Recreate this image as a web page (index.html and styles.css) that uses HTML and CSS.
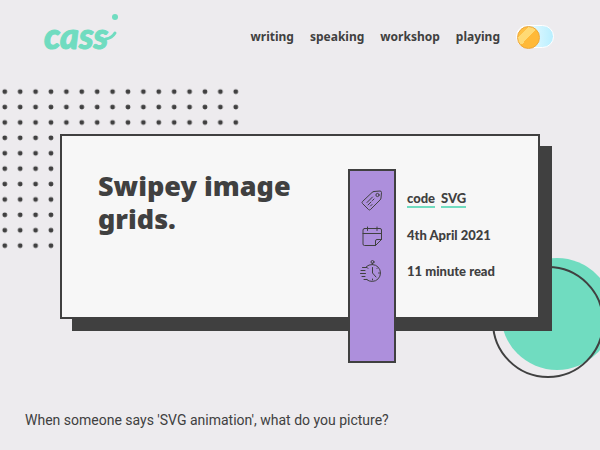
FILE: index.html
```html
<!DOCTYPE html>
<html lang="en">
<head>
<meta charset="utf-8">
<meta name="viewport" content="width=device-width, initial-scale=1">
<title>Swipey image grids.</title>
<link rel="stylesheet" href="styles.css">
</head>
<body>
<header class="site-header">
  <a class="logo" href="#" aria-label="cass">
    <svg width="80" height="44" viewBox="0 0 80 44">
      <text class="logo-text" x="0" y="37">cass</text>
      <path class="logo-tail" d="M62 27Q68 26 71 21"/>
      <circle class="logo-dot" cx="71" cy="5" r="3"/>
    </svg>
  </a>
  <nav class="nav">
    <a href="#">writing</a>
    <a href="#">speaking</a>
    <a href="#">workshop</a>
    <a href="#">playing</a>
    <input class="toggle" type="checkbox" aria-label="Dark theme">
  </nav>
</header>
<main>
  <section class="hero">
    <svg class="dots" width="248" height="170" aria-hidden="true">
      <defs>
        <pattern id="dot" width="15.4" height="15.4" patternUnits="userSpaceOnUse">
          <circle cx="4.8" cy="7.7" r="2.4"/>
        </pattern>
      </defs>
      <rect width="246" height="169.4" fill="url(#dot)"/>
    </svg>
    <svg class="circles" width="124" height="124" viewBox="0 0 124 124" aria-hidden="true">
      <circle class="disc" cx="66" cy="58" r="56"/>
      <circle class="ring" cx="57" cy="66" r="55"/>
    </svg>
    <article class="card">
      <h1>Swipey image grids.</h1>
      <div class="meta">
        <div class="ribbon">
          <svg class="icon" viewBox="0 0 24 24" aria-hidden="true">
            <path d="M14 3.5 20 3Q21.500 3 21.500 4.500L21 10Q21 11 20 12L10.500 21.500Q9.500 22.500 8.500 21.500L2.500 15.500Q1.500 14.500 2.500 13.500L12 4.500Q13 3.500 14 3.500Z"/>
            <circle cx="17.500" cy="7" r="1.600"/>
            <path d="M7 14.500 12.500 9M8 17 11 14M12.500 12.500 14 11M10.500 18 12 16.500"/>
          </svg>
          <svg class="icon" viewBox="0 0 24 24" aria-hidden="true">
            <path d="M4.500 4.500H20Q21.500 4.500 21.500 6V15.500L15.500 21.500H4.500Q3 21.500 3 20V6Q3 4.500 4.500 4.500ZM3 9.500H21.500M15.500 21.500V17Q15.500 15.500 17 15.500H21.500M7.500 3V6.500M17 3V6.500"/>
          </svg>
          <svg class="icon" viewBox="0 0 24 24" aria-hidden="true">
            <path d="M6.500 6.500A8.500 8.500 0 1 1 6.500 19.500M12.500 4.500V3M12.500 7.500V13L16 17M12.500 19V20M18.500 13H19.500M17 8.500 17.500 8M8 8.500 7.500 8M2.500 7.500H7M1 10.500H5M.5 13.500H5.500M2 16.500H5M4 19.500H7"/>
            <circle cx="12.500" cy="2" r="1.500"/>
          </svg>
        </div>
        <div class="facts">
          <p class="tags"><a href="#">code</a><a href="#">SVG</a></p>
          <p><time datetime="2021-04-04">4th April 2021</time></p>
          <p>11 minute read</p>
        </div>
      </div>
    </article>
  </section>
  <p class="intro">When someone says 'SVG animation', what do you picture?</p>
</main>
</body>
</html>
```
FILE: styles.css
```css
:root {
  --ink: #404040;
  --mint: #70dcc0;
  --paper: #f7f7f7;
}
* { box-sizing: border-box; }
body {
  margin: 0;
  background: #edebee;
  color: var(--ink);
  font-family: "Noto Sans", sans-serif;
  overflow-x: hidden;
}
a { color: inherit; text-decoration: none; }
h1, p { margin: 0; }
.site-header {
  display: flex;
  justify-content: space-between;
  align-items: flex-start;
  padding: 12px 46px 0 44px;
}
.logo svg { display: block; overflow: visible; }
.logo-text {
  font: italic 900 36px Lato, sans-serif;
  fill: var(--mint);
  stroke: var(--mint);
  stroke-width: 1;
  stroke-linejoin: round;
}
.logo-dot { fill: var(--mint); }
.logo-tail {
  fill: none;
  stroke: var(--mint);
  stroke-width: 3;
  stroke-linecap: round;
}
.nav {
  display: flex;
  align-items: center;
  gap: 16px;
  padding-top: 12px;
  font-size: 12px;
  font-weight: 700;
  line-height: 22px;
}
.nav a { padding-top: 2px; }
.toggle {
  appearance: none;
  width: 38px;
  height: 23px;
  margin: 0;
  border: 1px solid #fff;
  border-radius: 12px;
  background: linear-gradient(90deg, #fff, #b8efff);
}
.toggle::before {
  content: "";
  display: block;
  width: 21px;
  height: 21px;
  border: 1px solid #eea536;
  border-radius: 50%;
  background: linear-gradient(135deg, #ffc044 25%, #ffda75 25% 50%, #ffb938 50%);
}
.hero {
  position: relative;
  padding: 78px 60px 0;
}
.dots {
  position: absolute;
  left: 0;
  top: 28px;
  fill: var(--ink);
}
.circles {
  position: absolute;
  right: -15px;
  top: 200px;
}
.disc { fill: var(--mint); }
.ring { fill: none; stroke: var(--ink); stroke-width: 2; }
.card {
  position: relative;
  display: grid;
  grid-template-columns: 1fr 190px;
  padding: 33px 0 0 36px;
  border: 2px solid var(--ink);
  background: var(--paper);
  box-shadow: 12px 12px 0 var(--ink);
}
h1 {
  font-size: 27px;
  font-weight: 900;
  line-height: 33px;
}
.meta {
  display: flex;
  gap: 11px;
  margin-bottom: -46px;
}
.ribbon {
  display: flex;
  flex-direction: column;
  align-items: center;
  gap: 12px;
  width: 48px;
  height: 194px;
  padding-top: 17px;
  border: 2px solid var(--ink);
  background: #ad8fdc;
}
.icon {
  width: 24px;
  height: 24px;
  fill: none;
  stroke: var(--ink);
  stroke-width: 1;
  stroke-linecap: round;
  stroke-linejoin: round;
}
.facts {
  display: flex;
  flex-direction: column;
  gap: 18px;
  padding-top: 21px;
  font-family: Lato, sans-serif;
  font-size: 13px;
  font-weight: 900;
  line-height: 18px;
}
.tags {
  display: flex;
  gap: 6px;
  line-height: 16px;
}
.tags a { border-bottom: 2px solid var(--mint); }
.intro {
  padding: 92px 25px 24px;
  font-family: Roboto, sans-serif;
  font-size: 14px;
  line-height: 18px;
}
```
